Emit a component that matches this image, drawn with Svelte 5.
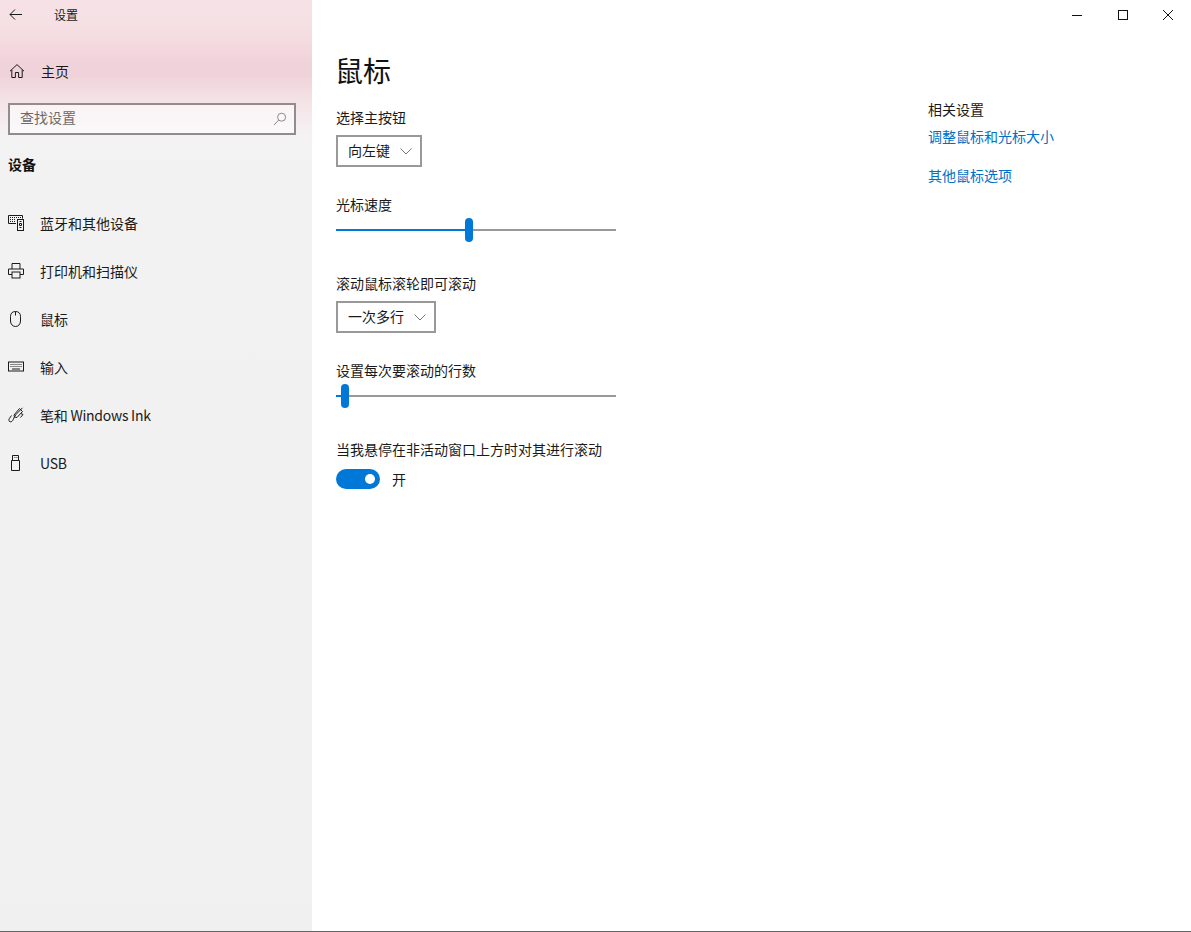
<script>
  const navItems = [
    { label: '蓝牙和其他设备', icon: 'bluetooth' },
    { label: '打印机和扫描仪', icon: 'printer' },
    { label: '鼠标', icon: 'mouse' },
    { label: '输入', icon: 'keyboard' },
    { label: '笔和 Windows Ink', icon: 'pen', latin: true },
    { label: 'USB', icon: 'usb', latin: true }
  ];
</script>

<div class="window">
  <aside class="sidebar">
    <div class="topbar">
      <svg class="back" width="16" height="16" viewBox="0 0 16 16" fill="none" stroke="#1a1a1a" stroke-width="1">
        <path d="M2 7.5h12M7 2.5l-5 5 5 5" />
      </svg>
      <span class="app-title">设置</span>
    </div>

    <div class="home">
      <svg width="16" height="16" viewBox="0 0 16 16" fill="none" stroke="#1a1a1a" stroke-width="1">
        <path d="M1 8.2 8 1.6l7 6.6M2.8 6.8v7.7h3.6V9.5h3.2v5h3.6V6.8" />
      </svg>
      <span>主页</span>
    </div>

    <div class="search">
      <span class="placeholder">查找设置</span>
      <svg width="14" height="14" viewBox="0 0 14 14" fill="none" stroke="#8a8a8a" stroke-width="1">
        <circle cx="8.6" cy="5.2" r="4" />
        <path d="M5.7 8.1 1 13" />
      </svg>
    </div>

    <div class="section">设备</div>

    <nav>
      {#each navItems as item}
        <div class="nav-item" class:latin={item.latin}>
          <span class="nav-icon">
            <svg width="16" height="16" viewBox="0 0 16 16" fill="none" stroke="#1a1a1a" stroke-width="1">
              {#if item.icon === 'bluetooth'}
                <path d="M14.5 3.500V.5H.5v8H8" />
                <path d="M2 2.500h11M2 4.500h6M2 6.500h6" stroke-dasharray="1 1" />
                <rect x="9.500" y="4.500" width="6" height="11" />
                <path d="M11.500 6.500h2M11.500 8.500h2v2h-2zM11.500 12.500h2" />
              {:else if item.icon === 'printer'}
                <path d="M4 6V.5h8V6M4 11.500H.5V6h15v5.500H12" />
                <rect x="4" y="9" width="8" height="6" />
              {:else if item.icon === 'mouse'}
                <path d="M7.500.5c3.200 0 5 1.800 5 5v4.500c0 3-2 5.500-5 5.500s-5-2.500-5-5.500V5.500c0-3.200 1.800-5 5-5z" />
                <path d="M7.500 .5v4" />
              {:else if item.icon === 'keyboard'}
                <rect x=".5" y="3" width="15" height="9" />
                <path d="M2.500 5.500h11M2.500 7.500h11" stroke-dasharray="1 1" />
                <path d="M4 10h8" />
              {:else if item.icon === 'pen'}
                <path d="M14.500 .8 8 7.500c-1 1.200-2 3-2.800 5-.6 1.500-1.500 2.500-3 2.300-1.400-.2-1.600-1.800-.9-3.200L3.500 8.500" />
                <path d="M11.500 1.500 14.500 4.500 9 10.500 6.500 10 6 8zM13 6.500l2 1-2.500 3" />
              {:else}
                <path d="M3.500 5.500h8v10h-8zM4.500 5.500V.5h6v5M6.500 2.500h.8M8.500 2.500h.8" />
              {/if}
            </svg>
          </span>
          <span>{item.label}</span>
        </div>
      {/each}
    </nav>
  </aside>

  <main class="main">
    <div class="controls">
      <button aria-label="最小化">
        <svg width="10" height="10" viewBox="0 0 10 10" stroke="#111" fill="none"><path d="M0 5.500h10" /></svg>
      </button>
      <button aria-label="最大化">
        <svg width="10" height="10" viewBox="0 0 10 10" stroke="#111" fill="none"><rect x=".5" y=".5" width="9" height="9" /></svg>
      </button>
      <button aria-label="关闭">
        <svg width="10" height="10" viewBox="0 0 10 10" stroke="#111" fill="none"><path d="M0 0l10 10M10 0 0 10" /></svg>
      </button>
    </div>

    <div class="content">
      <section class="settings">
        <h1>鼠标</h1>

        <div class="label first">选择主按钮</div>
        <div class="select select-short">
          <span>向左键</span>
          <svg width="12" height="7" viewBox="0 0 12 7" fill="none" stroke="#777"><path d="M.5.5 6 6l5.500-5.500" /></svg>
        </div>

        <div class="label gap-a">光标速度</div>
        <div class="slider">
          <div class="track" style="--fill: 133px"></div>
          <div class="thumb" style="margin-left: 129px"></div>
        </div>

        <div class="label gap-b">滚动鼠标滚轮即可滚动</div>
        <div class="select select-long">
          <span>一次多行</span>
          <svg width="12" height="7" viewBox="0 0 12 7" fill="none" stroke="#777"><path d="M.5.5 6 6l5.500-5.500" /></svg>
        </div>

        <div class="label gap-a">设置每次要滚动的行数</div>
        <div class="slider">
          <div class="track" style="--fill: 9px"></div>
          <div class="thumb" style="margin-left: 5px"></div>
        </div>

        <div class="label gap-b">当我悬停在非活动窗口上方时对其进行滚动</div>
        <div class="toggle-row">
          <div class="toggle"><span class="knob"></span></div>
          <span>开</span>
        </div>
      </section>

      <section class="related">
        <div class="related-title">相关设置</div>
        <div class="link">调整鼠标和光标大小</div>
        <div class="link link-2">其他鼠标选项</div>
      </section>
    </div>
  </main>
</div>

<style>
  :global(body) {
    margin: 0;
    background: #fff;
    overflow: hidden;
  }

  .window {
    display: flex;
    width: 1191px;
    height: 932px;
    box-sizing: border-box;
    border-bottom: 1px solid #666;
    font-family: "Noto Sans CJK SC", "Noto Sans", sans-serif;
    font-size: 14px;
    line-height: 20px;
    color: #1a1a1a;
  }

  .sidebar {
    width: 312px;
    flex-shrink: 0;
    background: linear-gradient(180deg, #f6e2e6 0, #f5dfe3 30px, #f1d4da 60px, #f0d3da 75px, #f4e5e8 105px, #f4f2f3 135px, #f2f2f2 200px, #f0f0f0 100%);
  }

  .topbar {
    display: flex;
    align-items: center;
    height: 30px;
    padding-left: 8px;
  }

  .app-title {
    font-size: 12px;
    margin-left: 30px;
  }

  .back {
    margin-top: -1px;
  }

  .home {
    display: flex;
    align-items: center;
    height: 48px;
    margin-top: 18px;
    margin-bottom: 7px;
    padding-left: 9px;
    padding-bottom: 2px;
    gap: 16px;
    box-sizing: border-box;
  }

  .home svg {
    flex-shrink: 0;
  }

  .search {
    display: flex;
    align-items: center;
    justify-content: space-between;
    box-sizing: border-box;
    width: 288px;
    height: 32px;
    margin-left: 8px;
    padding: 0 7px 0 10px;
    border: 2px solid #928c8e;
    background: rgba(255, 255, 255, 0.55);
  }

  .placeholder {
    color: #6b6b6b;
    padding-bottom: 4px;
  }

  .section {
    margin: 19px 0 0 8px;
    font-weight: 700;
    color: #111;
  }

  nav {
    margin-top: 26px;
  }

  .nav-item {
    display: flex;
    align-items: center;
    box-sizing: border-box;
    height: 48px;
    padding-left: 8px;
    padding-bottom: 2px;
  }

  .latin {
    letter-spacing: -0.25px;
  }

  .nav-icon {
    display: flex;
    width: 32px;
    flex-shrink: 0;
  }

  .main {
    flex: 1;
    min-width: 0;
  }

  .controls {
    display: flex;
    justify-content: flex-end;
    height: 30px;
  }

  .controls button {
    display: flex;
    align-items: center;
    justify-content: center;
    width: 45.5px;
    height: 30px;
    padding: 0;
    border: 0;
    background: none;
  }

  .content {
    display: flex;
    padding-left: 24px;
  }

  .settings {
    width: 592px;
    flex-shrink: 0;
  }

  h1 {
    margin: 19px 0 0 -1px;
    font-size: 28px;
    line-height: 42px;
    font-weight: 400;
    color: #111;
  }

  .label {
    height: 20px;
  }

  .first {
    margin-top: 16px;
    margin-bottom: 8px;
  }

  .gap-a {
    margin-top: 27px;
  }

  .gap-b {
    margin-top: 31px;
  }

  .select {
    display: flex;
    align-items: center;
    box-sizing: border-box;
    height: 32px;
    padding-left: 10px;
    gap: 10px;
    border: 2px solid #999;
  }

  .select span {
    padding-bottom: 2px;
  }

  .select-short {
    width: 86px;
  }

  .select-long {
    width: 100px;
    margin-top: 8px;
  }

  .slider {
    position: relative;
    width: 280px;
    height: 24px;
    margin-top: 4px;
  }

  .track {
    position: absolute;
    top: 11px;
    left: 0;
    right: 0;
    height: 2px;
    background: linear-gradient(90deg, #0078d7 var(--fill), #999 var(--fill));
  }

  .thumb {
    position: absolute;
    top: 0;
    width: 8px;
    height: 24px;
    border-radius: 4px;
    background: #0078d7;
  }

  .toggle-row {
    display: flex;
    align-items: center;
    gap: 12px;
    margin-top: 10px;
  }

  .toggle {
    display: flex;
    align-items: center;
    justify-content: flex-end;
    box-sizing: border-box;
    width: 44px;
    height: 20px;
    padding-right: 5px;
    border-radius: 10px;
    background: #0078d7;
  }

  .knob {
    width: 10px;
    height: 10px;
    border-radius: 50%;
    background: #fff;
  }

  .related {
    padding-top: 69px;
  }

  .related-title {
    color: #1a1a1a;
  }

  .link {
    margin-top: 7px;
    color: #0070c8;
  }

  .link-2 {
    margin-top: 19px;
  }
</style>
